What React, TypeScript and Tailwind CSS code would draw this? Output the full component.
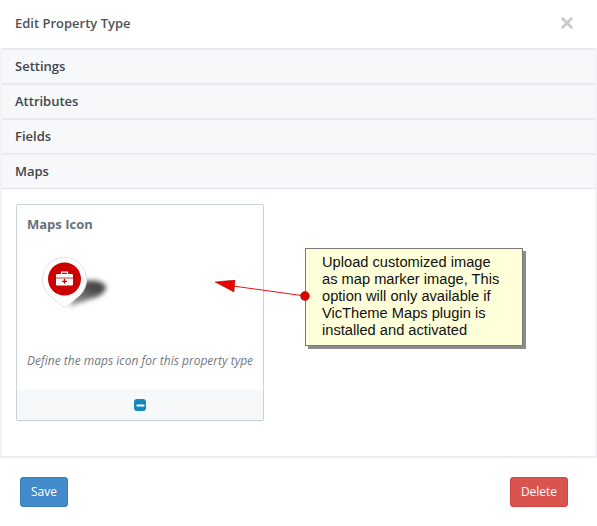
import { X, Minus } from "lucide-react";

const TABS = ["Settings", "Attributes", "Fields", "Maps"];

function MapPin() {
  return (
    <svg width="76" height="64" viewBox="0 0 76 64" className="block">
      <defs>
        <filter id="pin-shadow" x="-40%" y="-60%" width="180%" height="220%">
          <feGaussianBlur stdDeviation="2.8" />
        </filter>
        <linearGradient id="shadow-fade" x1="0" y1="1" x2="1" y2="0">
          <stop offset="0" stopColor="#aaa" />
          <stop offset="0.7" stopColor="#444" />
        </linearGradient>
      </defs>
      <path d="M28 52 L44 26 Q60 24 66 31 Q66 40 50 44 Z" fill="url(#shadow-fade)" filter="url(#pin-shadow)" />
      <path
        d="M24.500 53 L9 40 A22 22 0 1 1 40 40 Z"
        fill="#fff"
        stroke="#e4e4e4"
        strokeWidth="1"
        strokeLinejoin="round"
      />
      <circle cx="24.500" cy="24" r="16.500" fill="#cc0000" />
      <path d="M21.500 19 v-1.800 h6 v1.800" fill="none" stroke="#fff" strokeWidth="1.200" />
      <rect x="16" y="19" width="17" height="11.500" rx="1.200" fill="#fff" />
      <path d="M16 23 h17" stroke="#cc0000" strokeWidth="0.800" />
      <path d="M24.500 23.800 v5 M22 26.300 h5" stroke="#cc0000" strokeWidth="1.300" />
    </svg>
  );
}

export default function App() {
  return (
    <div className="relative flex h-[526px] w-[597px] flex-col overflow-hidden bg-white font-['Open_Sans',sans-serif] text-[13px] text-[#4d5259]">
      <div className="flex h-[48px] shrink-0 items-center justify-between pb-[2px] pl-[15px] pr-[21px]">
        <h4 className="text-[13px] font-semibold leading-none">Edit Property Type</h4>
        <X size={18} strokeWidth={3.5} className="text-[#cacaca]" />
      </div>

      <div className="flex flex-1 flex-col border-x-2 border-b-2 border-[#e9edf2] border-x-[#f1f3f6]">
        {TABS.map((tab) => (
          <div
            key={tab}
            className="flex h-[35px] shrink-0 items-center border-t-2 border-[#e9ebef] bg-[#f7f8fa] pl-[13px] font-semibold text-[#3f454c]"
          >
            {tab}
          </div>
        ))}

        <div className="flex-1 border-t border-[#dfe3e8] pl-[14px] pt-[15px]">
          <div className="flex h-[217px] w-[248px] flex-col rounded-[2px] border border-[#c9d3dc] shadow-[0_1px_1px_rgba(0,0,0,0.03)]">
            <div className="flex-1 px-[10px] pt-[10px]">
              <div className="text-[13px] font-bold leading-[18px] text-[#68727e]">Maps Icon</div>
              <div className="ml-[13px] mt-[22px]">
                <MapPin />
              </div>
              <p className="mt-[34px] whitespace-nowrap text-[12px] italic leading-[16px] text-[#737a82]">
                Define the maps icon for this property type
              </p>
            </div>
            <div className="flex h-[30px] shrink-0 items-center justify-center bg-[#f7f8fa]">
              <span className="flex h-[12px] w-[12px] items-center justify-center rounded-[3px] bg-[#1589bd]">
                <Minus size={11} strokeWidth={4} className="text-white" />
              </span>
            </div>
          </div>
        </div>
      </div>

      <div className="flex h-[68px] shrink-0 items-center justify-between pl-[20px] pr-[29px]">
        <button className="h-[30px] w-[48px] rounded-[3px] border border-[#3a7db8] bg-[#428bca] text-[12px] text-white">
          Save
        </button>
        <button className="h-[30px] w-[58px] rounded-[3px] border border-[#d14543] bg-[#d9534f] text-[12px] text-white">
          Delete
        </button>
      </div>

      {/* callout pasted over the screenshot */}
      <div className="absolute left-[305px] top-[248px] h-[98px] w-[218px] border border-[#77797a] bg-[#ffffd9] pl-[16px] pt-[5px] font-['Liberation_Sans',sans-serif] text-[14.670px] leading-[17px] text-[#111] shadow-[3px_3px_0_#8c8c8c]">
        Upload customized image
        <br />
        as map marker image, This
        <br />
        option will only available if
        <br />
        VicTheme Maps plugin is
        <br />
        installed and activated
      </div>
      <svg width="100" height="30" viewBox="215 280 100 30" className="absolute left-[215px] top-[280px]">
        <line x1="233" y1="286" x2="305" y2="296" stroke="#ee1111" strokeWidth="1" />
        <path d="M215 282 L235 280 L234 292 Z" fill="#ee0000" stroke="#8a1a1a" strokeWidth="0.500" />
        <circle cx="305" cy="296" r="4.500" fill="#dd0000" stroke="#991111" strokeWidth="0.500" />
      </svg>
    </div>
  );
}
